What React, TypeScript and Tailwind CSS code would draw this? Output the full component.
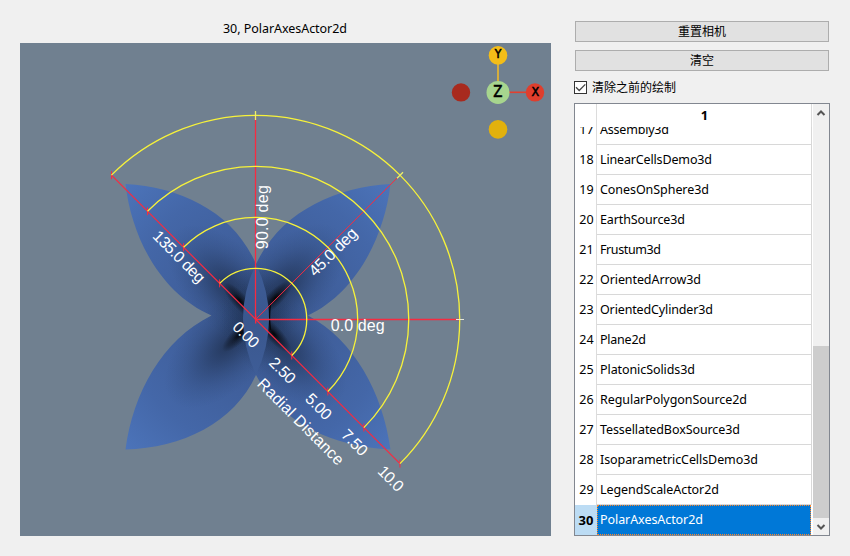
import React from "react";

const rows: [number, string, number][] = [
  [17, "Assembly3d", 69],
  [18, "LinearCellsDemo3d", 112],
  [19, "ConesOnSphere3d", 109],
  [20, "EarthSource3d", 85],
  [21, "Frustum3d", 61],
  [22, "OrientedArrow3d", 101],
  [23, "OrientedCylinder3d", 113],
  [24, "Plane2d", 46],
  [25, "PlatonicSolids3d", 95],
  [26, "RegularPolygonSource2d", 147],
  [27, "TessellatedBoxSource3d", 140],
  [28, "IsoparametricCellsDemo3d", 158],
  [29, "LegendScaleActor2d", 119],
  [30, "PolarAxesActor2d", 103],
];

const CX = 255.7;
const CY = 319.4;
const D = Math.SQRT1_2;

const labels: [string, number, number, number, number][] = [
  ["135.0 deg", 179.3, 256.5, 45, 66.5],
  ["90.0 deg", 262, 217.2, -90, 64],
  ["45.0 deg", 332.7, 251.7, -45, 61],
  ["0.0 deg", 357.7, 325.3, 0, 54],
  ["0.00", 246.2, 334.5, 45, 30],
  ["2.50", 282.7, 370.2, 45, 30],
  ["5.00", 318.8, 406.3, 45, 30],
  ["7.50", 354.8, 442.4, 45, 30],
  ["10.0", 391, 478.5, 45, 29],
  ["Radial Distance", 301, 421.5, 45, 115],
];

const wideShades: [number, number, number][] = [
  [230, 288, 45],
  [228, 345, -45],
  [283, 287, -45],
  [283, 345, 45],
];

const tightShades: [number, number, number][] = [
  [240, 301, 48],
  [240, 334, -45],
  [275, 298, -45],
  [274, 334, 48],
];

function PolarScene() {
  return (
    <svg className="block h-[493px] w-[531px] bg-[#708090]" viewBox="20 43 531 493">
      <defs>
        <radialGradient id="petal" gradientUnits="userSpaceOnUse" cx="258" cy="317" r="188">
          <stop offset="0" stopColor="#3a578e" />
          <stop offset="0.35" stopColor="#3f5e9a" />
          <stop offset="0.7" stopColor="#4467a8" />
          <stop offset="1" stopColor="#4c74ba" />
        </radialGradient>
        <radialGradient id="wide">
          <stop offset="0" stopColor="#0c1422" stopOpacity="0.5" />
          <stop offset="0.3" stopColor="#101c30" stopOpacity="0.34" />
          <stop offset="0.65" stopColor="#182a48" stopOpacity="0.15" />
          <stop offset="1" stopColor="#203860" stopOpacity="0" />
        </radialGradient>
        <radialGradient id="tight">
          <stop offset="0" stopColor="#000" stopOpacity="0.92" />
          <stop offset="0.4" stopColor="#000" stopOpacity="0.45" />
          <stop offset="1" stopColor="#000" stopOpacity="0" />
        </radialGradient>
        <linearGradient id="lens" x1="0" y1="0" x2="0" y2="1">
          <stop offset="0" stopColor="#3e5d97" />
          <stop offset="0.5" stopColor="#3a578e" />
          <stop offset="1" stopColor="#3e5d97" />
        </linearGradient>
        <clipPath id="flower">
          <path d="M125.5 184C182 187 234 213 256 264C280 213 334 187 390.5 184C384 240 354 294 308 315.5C354 340 383 393 390.5 449.5C334 447 280 423 256 375C234 423 182 448 125.5 449.5C133 393 162 340 211.5 315.5C162 294 132 240 125.5 184Z" />
        </clipPath>
      </defs>
      <g clipPath="url(#flower)">
        <rect x="120" y="180" width="275" height="275" fill="url(#petal)" />
        {wideShades.map(([x, y, a]) => (
          <ellipse key={`${x}-${y}`} transform={`translate(${x} ${y}) rotate(${a})`} rx="80" ry="41" fill="url(#wide)" />
        ))}
        {tightShades.map(([x, y, a]) => (
          <ellipse key={`${x}-${y}`} transform={`translate(${x} ${y}) rotate(${a})`} rx="24" ry="8" fill="url(#tight)" />
        ))}
      </g>
      <path d="M270.500 304Q268.500 317 270.500 330" fill="none" stroke="#05070c" strokeWidth="1.4" />
      <path d="M256 264Q230 318 256 375Q282 318 256 264Z" fill="url(#lens)" />
      <g fill="none" stroke="#f72b40" strokeWidth="1">
        <path d="M255.500 319.500H460M255.500 320V115" strokeWidth="1.3" />
        <path d={`M${CX} ${CY}L${CX + 204 * D} ${CY - 204 * D}`} />
        <path strokeWidth="1.2" d={`M${CX - 204 * D} ${CY - 204 * D}L${CX + 204 * D} ${CY + 204 * D}`} />
        {[0, 51, 102, 153, 204].map((r) => (
          <path
            key={r}
            d={`M${CX + r * D} ${CY + r * D - 4}v8M${CX - r * D} ${CY - r * D - 4}v8`}
          />
        ))}
      </g>
      <g fill="none" stroke="#f7f23a" strokeWidth="1.3">
        {[51, 102, 153, 204].map((r) => (
          <path
            key={r}
            d={`M${CX - r * D} ${CY - r * D}A${r} ${r} 0 1 1 ${CX + r * D} ${CY + r * D}`}
          />
        ))}
        <path stroke="#eef06a" d="M255.500 111v9M397 178.300L403 172.200" />
        <path stroke="#e8e8d8" strokeWidth="1" d="M456 319.500h8" />
      </g>
      <g fill="#fff" fontFamily="'Liberation Sans', Arial, sans-serif" fontSize="16" textAnchor="middle">
        {labels.map(([t, x, y, a, w]) => (
          <text key={t} transform={`translate(${x} ${y}) rotate(${a})`} y="5.7" textLength={w}>
            {t}
          </text>
        ))}
      </g>
      <path d="M498 64V82" stroke="#efb92a" strokeWidth="1.6" />
      <path d="M509 92.300H527" stroke="#e2402f" strokeWidth="1.6" />
      <circle cx="498" cy="55.400" r="9.300" fill="#f4bd18" />
      <circle cx="461" cy="92.400" r="9.200" fill="#a82a1e" />
      <circle cx="535" cy="92.400" r="9.200" fill="#df3e2d" />
      <circle cx="498" cy="129.400" r="9.300" fill="#e2b10d" />
      <circle cx="498" cy="92.400" r="11.500" fill="#a7d58e" />
      <g fontFamily="'DejaVu Sans', sans-serif" fill="#000" stroke="#000" strokeWidth="0.6" textAnchor="middle">
        <text transform="translate(498 58) scale(0.9 1)" fontSize="12">Y</text>
        <text transform="translate(535.300 96) scale(0.9 1)" fontSize="12.500">X</text>
        <text transform="translate(498 97) scale(0.82 1)" fontSize="16.500">Z</text>
      </g>
    </svg>
  );
}

function FitText({ text, width, color }: { text: string; width: number; color: string }) {
  return (
    <svg className="block h-5 shrink-0 overflow-visible" style={{ width }} aria-label={text}>
      <text x="0" y="14" fontSize="12.500" textLength={width} fill={color}>
        {text}
      </text>
    </svg>
  );
}

function Arrow({ down }: { down?: boolean }) {
  return (
    <svg className="block size-4" viewBox="0 0 16 16">
      <path d={down ? "M4.500 7L8 10.500L11.500 7" : "M4.500 11L8 7.500L11.500 11"} fill="none" stroke="#555" strokeWidth="2" />
    </svg>
  );
}

export default function App() {
  return (
    <div className="flex h-[556px] w-[850px] overflow-hidden bg-[#f0f0f0] pl-5 font-['Noto_Sans','Noto_Sans_CJK_SC',sans-serif] text-[12px] text-black">
      <main className="flex w-[531px] flex-col">
        <div className="flex h-[43px] items-end justify-center pr-px pb-1">
          <FitText text="30, PolarAxesActor2d" width={124} color="#000" />
        </div>
        <PolarScene />
      </main>
      <aside className="ml-[23px] flex w-[256px] flex-col pt-[21px]">
        <button className="mx-px h-[21px] border border-[#adadad] bg-[#e1e1e1] leading-[19px]">重置相机</button>
        <button className="mx-px mt-2 h-[21px] border border-[#adadad] bg-[#e1e1e1] pt-px leading-[18px]">清空</button>
        <label className="mt-2 flex h-[18px] items-start gap-[5px]">
          <svg className="mt-[2px] block size-[13px] border border-[#333] bg-white" viewBox="0 0 11 11">
            <path d="M1 5.300L4.200 8.500L10.300 2.400" fill="none" stroke="#444" strokeWidth="1.300" />
          </svg>
          <span className="leading-[18px]">清除之前的绘制</span>
        </label>
        <div className="mt-[6px] flex h-[433px] border border-[#828790] bg-white">
          <div className="flex w-[238px] flex-col">
            <div className="flex h-[23px] shrink-0">
              <div className="w-[22px] border-r border-[#dcdcdc]" />
              <div className="flex w-[215px] items-center justify-center border-r border-[#dcdcdc] pl-px text-[13px] font-bold">1</div>
            </div>
            <div className="flex h-[408px] flex-col justify-end overflow-hidden">
              {rows.map(([n, name, w]) => {
                const on = n === 30;
                return (
                  <div key={n} className="flex h-[30px] shrink-0">
                    <div
                      className={
                        on
                          ? "flex w-[22px] items-center justify-center bg-[#bcdcf4] pt-px text-[13px] font-bold"
                          : "flex w-[22px] items-center justify-center border-r border-[#dcdcdc] pt-px pl-0.5 text-[12.5px]"
                      }
                    >
                      {n}
                    </div>
                    <div
                      className={
                        on
                          ? "flex w-[214px] items-center border border-dotted border-[#ff8728] bg-[#0078d7] pl-[2px]"
                          : "flex w-[215px] items-center border-r border-b border-[#d8d8d8] pl-[3px]"
                      }
                    >
                      <FitText text={name} width={w} color={on ? "#fff" : "#000"} />
                    </div>
                  </div>
                );
              })}
            </div>
          </div>
          <div className="flex w-4 flex-col bg-[#f0f0f0]">
            <Arrow />
            <div className="mt-[226px] h-[172px] bg-[#cdcdcd]" />
            <Arrow down />
          </div>
        </div>
      </aside>
    </div>
  );
}
